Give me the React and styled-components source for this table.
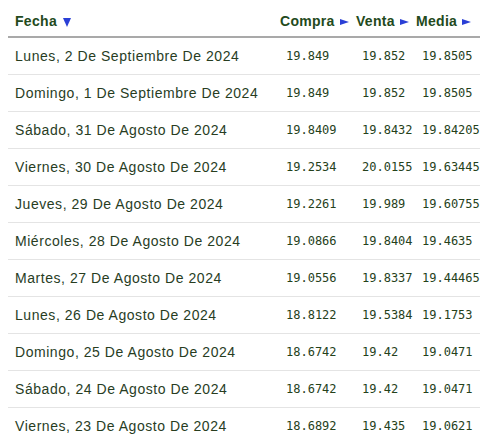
import React from 'react';
import styled, { createGlobalStyle } from 'styled-components';

const GlobalStyle = createGlobalStyle`
  body {
    margin: 0;
    padding: 0 8px;
    background: #ffffff;
    font-family: "Liberation Sans", Arial, sans-serif;
  }
`;

const Table = styled.table`
  width: 472px;
  border-collapse: collapse;
  table-layout: fixed;
`;

const HeadCell = styled.th`
  box-sizing: border-box;
  width: ${props => props.w}px;
  text-align: left;
  padding: 13px 0 6px 7px;
  font-size: 14px;
  line-height: 17px;
  font-weight: 700;
  color: #234a1c;
  border-bottom: 2px solid #a9a9a9;
  white-space: nowrap;
  letter-spacing: 0.3px;
`;

const DownArrow = styled.span`
  display: inline-block;
  margin-left: 6px;
  width: 0;
  height: 0;
  border-left: 4.5px solid transparent;
  border-right: 4.5px solid transparent;
  border-top: 9px solid #2a3fd6;
  vertical-align: -1px;
`;

const RightArrow = styled.span`
  display: inline-block;
  margin-left: 5px;
  width: 0;
  height: 0;
  border-top: 3px solid transparent;
  border-bottom: 3px solid transparent;
  border-left: 9px solid #2a3fd6;
  vertical-align: 1px;
`;

const Row = styled.tr`
  border-bottom: 1px solid #e4e4e4;
  &:last-child {
    border-bottom: none;
  }
`;

const DateCell = styled.td`
  padding: 0 0 0 7px;
  height: 36px;
  font-size: 14px;
  color: #283d1f;
  white-space: nowrap;
  letter-spacing: 0.55px;
`;

const NumCell = styled.td`
  padding: 0 0 0 13px;
  height: 36px;
  font-family: "DejaVu Sans Mono", "Liberation Mono", monospace;
  font-size: 12px;
  color: #25411b;
  white-space: nowrap;
`;

const rows = [
  ['Lunes, 2 De Septiembre De 2024', '19.849', '19.852', '19.8505'],
  ['Domingo, 1 De Septiembre De 2024', '19.849', '19.852', '19.8505'],
  ['Sábado, 31 De Agosto De 2024', '19.8409', '19.8432', '19.84205'],
  ['Viernes, 30 De Agosto De 2024', '19.2534', '20.0155', '19.63445'],
  ['Jueves, 29 De Agosto De 2024', '19.2261', '19.989', '19.60755'],
  ['Miércoles, 28 De Agosto De 2024', '19.0866', '19.8404', '19.4635'],
  ['Martes, 27 De Agosto De 2024', '19.0556', '19.8337', '19.44465'],
  ['Lunes, 26 De Agosto De 2024', '18.8122', '19.5384', '19.1753'],
  ['Domingo, 25 De Agosto De 2024', '18.6742', '19.42', '19.0471'],
  ['Sábado, 24 De Agosto De 2024', '18.6742', '19.42', '19.0471'],
  ['Viernes, 23 De Agosto De 2024', '18.6892', '19.435', '19.0621'],
];

export default function App() {
  return (
    <>
      <GlobalStyle />
      <Table>
        <thead>
          <tr>
            <HeadCell w={265}>Fecha<DownArrow /></HeadCell>
            <HeadCell w={76}>Compra<RightArrow /></HeadCell>
            <HeadCell w={60}>Venta<RightArrow /></HeadCell>
            <HeadCell w={71}>Media<RightArrow /></HeadCell>
          </tr>
        </thead>
        <tbody>
          {rows.map(r => (
            <Row key={r[0]}>
              <DateCell>{r[0]}</DateCell>
              <NumCell>{r[1]}</NumCell>
              <NumCell>{r[2]}</NumCell>
              <NumCell>{r[3]}</NumCell>
            </Row>
          ))}
        </tbody>
      </Table>
    </>
  );
}
